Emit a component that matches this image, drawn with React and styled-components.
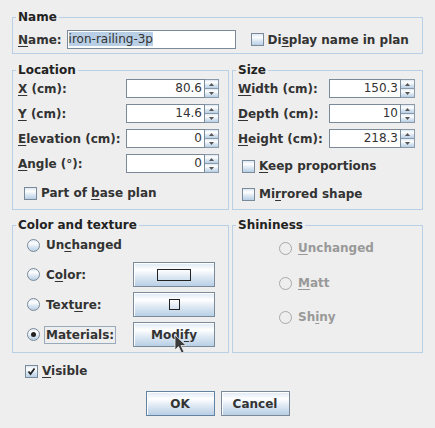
import React from 'react'
import styled, { createGlobalStyle } from 'styled-components'

const Global = createGlobalStyle`
  html, body { margin: 0; padding: 0; background: #eeeeee; }
  body {
    font-family: "DejaVu Sans", "Liberation Sans", sans-serif;
    font-size: 12px;
    color: #333333;
  }
`

const ocean = `linear-gradient(to bottom, #dde8f3 0%, #ffffff 30%, #dde8f3 60%, #b8cfe5 100%)`

const Dialog = styled.div`
  position: relative;
  width: 435px;
  height: 428px;
  box-sizing: border-box;
  padding: 10px 12px 0 12px;
  display: flex;
  flex-direction: column;
`

const Group = styled.fieldset`
  margin: 0;
  padding: 0;
  min-width: 0;
  border: 1px solid #b8cfe5;
  display: flex;
  flex-direction: column;
`

const Title = styled.legend`
  margin-left: 3px;
  padding: 0 2px;
  font-weight: bold;
  line-height: 15px;
  color: #222222;
`

const Body = styled.div`
  flex: 1;
  display: flex;
  flex-direction: column;
  align-items: ${p => p.$center ? 'center' : 'stretch'};
  padding: ${p => p.$pad};
`

const Grid = styled.div`
  display: grid;
  grid-template-columns: 217px 191px;
  column-gap: 3px;
  margin-top: ${p => p.$top}px;
`

const NameRow = styled.div`
  display: flex;
  align-items: center;
  height: 19px;
`

const Label = styled.span`
  font-weight: bold;
  white-space: nowrap;
  margin-right: ${p => p.$gap || 0}px;
`

const U = styled.u`
  text-decoration: underline;
  text-underline-offset: 2px;
  text-decoration-thickness: 1px;
`

const TextField = styled.div`
  width: ${p => p.$w}px;
  height: 19px;
  box-sizing: border-box;
  border: 1px solid #7a8a99;
  background: #ffffff;
  line-height: 17px;
  padding: 0 2px 0 1px;
  text-align: ${p => p.$right ? 'right' : 'left'};
  white-space: nowrap;
  overflow: hidden;
`

const Selected = styled.span`
  background: #b8cfe5;
  color: #333333;
`

const SpinRow = styled.div`
  display: flex;
  align-items: center;
  justify-content: space-between;
  height: 19px;
  margin-top: ${p => p.$top || 0}px;
`

const Spinner = styled.div`
  display: flex;
  height: 19px;
`

const Arrows = styled.div`
  width: 14px;
  display: flex;
  flex-direction: column;
`

const ArrowBtn = styled.div`
  height: ${p => p.$h}px;
  box-sizing: border-box;
  border: 1px solid #8a9aa9;
  border-left: none;
  border-top: ${p => p.$down ? 'none' : '1px solid #8a9aa9'};
  background: ${ocean};
  display: flex;
  align-items: center;
  justify-content: center;
`

const CheckRow = styled.div`
  display: flex;
  align-items: center;
  gap: 4px;
  height: 20px;
  font-weight: bold;
  margin-top: ${p => p.$top || 0}px;
  margin-left: ${p => p.$left || 0}px;
`

const Box = styled.span`
  width: 13px;
  height: 13px;
  box-sizing: border-box;
  border: 1px solid #7a8a99;
  background: ${ocean};
  display: inline-flex;
  align-items: center;
  justify-content: center;
  flex: none;
`

const RadioRow = styled.div`
  display: flex;
  align-items: center;
  justify-content: space-between;
  height: ${p => p.$h || 20}px;
  margin-top: ${p => p.$top || 0}px;
`

const RadioLabel = styled.div`
  display: flex;
  align-items: center;
  gap: 4px;
  font-weight: bold;
  color: ${p => p.$disabled ? '#999999' : '#333333'};
`

const Radio = styled.span`
  width: 13px;
  height: 13px;
  box-sizing: border-box;
  border-radius: 50%;
  border: 1px solid ${p => p.$disabled ? '#a8a8a8' : '#7a8a99'};
  background: ${p => p.$disabled ? '#eeeeee' : ocean};
  display: inline-flex;
  align-items: center;
  justify-content: center;
  flex: none;

  &::after {
    content: "";
    display: ${p => p.$on ? 'block' : 'none'};
    width: 5px;
    height: 5px;
    border-radius: 50%;
    background: #222222;
  }
`

const Focusable = styled.span`
  border: 1px solid ${p => p.$focus ? '#99aabb' : 'transparent'};
  padding: 1px 1px;
  line-height: 14px;
`

const Button = styled.button`
  width: ${p => p.$w}px;
  height: ${p => p.$h || 25}px;
  box-sizing: border-box;
  padding: 0;
  border: 1px solid ${p => p.$default ? '#63829f' : '#7a8a99'};
  box-shadow: inset 1px 1px 0 #ffffff;
  background: ${ocean};
  font-family: "DejaVu Sans", "Liberation Sans", sans-serif;
  font-size: 12px;
  font-weight: bold;
  color: #333333;
  display: flex;
  align-items: center;
  justify-content: center;
`

const Swatch = styled.span`
  width: ${p => p.$w}px;
  height: ${p => p.$h}px;
  box-sizing: border-box;
  border: 1px solid #222222;
`

const Footer = styled.div`
  display: flex;
  justify-content: center;
  gap: 6px;
  margin-top: 10px;
`

const Cursor = styled.svg`
  position: absolute;
  left: 174px;
  top: 334px;
`

const Up = () => (
  <svg width="5" height="3" viewBox="0 0 5 3"><path d="M2.5 0 L5 3 L0 3 Z" fill="#555" /></svg>
)
const Down = () => (
  <svg width="5" height="3" viewBox="0 0 5 3"><path d="M0 0 L5 0 L2.5 3 Z" fill="#555" /></svg>
)

const Spin = ({ value, w }) => (
  <Spinner>
    <TextField $w={w} $right>{value}</TextField>
    <Arrows>
      <ArrowBtn $h={10}><Up /></ArrowBtn>
      <ArrowBtn $h={9} $down><Down /></ArrowBtn>
    </Arrows>
  </Spinner>
)

const Check = ({ on }) => (
  <Box>
    {on && (
      <svg width="9" height="9" viewBox="0 0 9 9">
        <path d="M1.5 4.5 L3.5 7 L7.5 1.5" stroke="#222" strokeWidth="1.8" fill="none" />
      </svg>
    )}
  </Box>
)

const location = [
  [<><U>X</U> (cm):</>, '80.6'],
  [<><U>Y</U> (cm):</>, '14.6'],
  [<><U>E</U>levation (cm):</>, '0'],
  [<><U>A</U>ngle (°):</>, '0'],
]

const size = [
  [<><U>W</U>idth (cm):</>, '150.3'],
  [<><U>D</U>epth (cm):</>, '10'],
  [<><U>H</U>eight (cm):</>, '218.3'],
]

export default function App() {
  return (
    <Dialog>
      <Global />
      <Group>
        <Title>Name</Title>
        <Body $pad="5px 0 4px 5px">
          <NameRow>
            <Label $gap={5}><U>N</U>ame:</Label>
            <TextField $w={169}><Selected>iron-railing-3p</Selected></TextField>
            <CheckRow $left={15}>
              <Check />
              <span>Di<U>s</U>play name in plan</span>
            </CheckRow>
          </NameRow>
        </Body>
      </Group>

      <Grid $top={9}>
        <Group>
          <Title>Location</Title>
          <Body $pad="1px 9px 6px 5px">
            {location.map(([label, value], i) => (
              <SpinRow key={i} $top={i ? 6 : 0}>
                <Label>{label}</Label>
                <Spin value={value} w={79} />
              </SpinRow>
            ))}
            <CheckRow $top={10} $left={6}>
              <Check />
              <span>Part of <U>b</U>ase plan</span>
            </CheckRow>
          </Body>
        </Group>
        <Group>
          <Title>Size</Title>
          <Body $pad="1px 7px 5px 5px">
            {size.map(([label, value], i) => (
              <SpinRow key={i} $top={i ? 6 : 0}>
                <Label>{label}</Label>
                <Spin value={value} w={72} />
              </SpinRow>
            ))}
            <CheckRow $top={8} $left={4}>
              <Check />
              <span><U>K</U>eep proportions</span>
            </CheckRow>
            <CheckRow $top={8} $left={4}>
              <Check />
              <span>Mi<U>r</U>rored shape</span>
            </CheckRow>
          </Body>
        </Group>
      </Grid>

      <Grid $top={8}>
        <Group>
          <Title>Color and texture</Title>
          <Body $pad="2px 13px 5px 14px">
            <RadioRow>
              <RadioLabel><Radio /><Focusable>Un<U>c</U>hanged</Focusable></RadioLabel>
            </RadioRow>
            <RadioRow $h={25} $top={7}>
              <RadioLabel><Radio /><Focusable>C<U>o</U>lor:</Focusable></RadioLabel>
              <Button $w={82}><Swatch $w={34} $h={12} /></Button>
            </RadioRow>
            <RadioRow $h={25} $top={5}>
              <RadioLabel><Radio /><Focusable>Text<U>u</U>re:</Focusable></RadioLabel>
              <Button $w={82}><Swatch $w={11} $h={11} /></Button>
            </RadioRow>
            <RadioRow $h={25} $top={5}>
              <RadioLabel><Radio $on /><Focusable $focus>Materials:</Focusable></RadioLabel>
              <Button $w={82}>Modi<U>f</U>y</Button>
            </RadioRow>
          </Body>
        </Group>
        <Group>
          <Title>Shininess</Title>
          <Body $center $pad="5px 0 5px 0">
            <RadioRow>
              <RadioLabel $disabled><Radio $disabled /><Focusable><U>U</U>nchanged</Focusable></RadioLabel>
            </RadioRow>
            <RadioRow $top={15}>
              <RadioLabel $disabled style={{ width: 97 }}><Radio $disabled /><Focusable><U>M</U>att</Focusable></RadioLabel>
            </RadioRow>
            <RadioRow $top={14}>
              <RadioLabel $disabled style={{ width: 97 }}><Radio $disabled /><Focusable>Sh<U>i</U>ny</Focusable></RadioLabel>
            </RadioRow>
          </Body>
        </Group>
      </Grid>

      <CheckRow $top={8} $left={13}>
        <Check on />
        <span><U>V</U>isible</span>
      </CheckRow>

      <Footer>
        <Button $w={69} $default>OK</Button>
        <Button $w={69}>Cancel</Button>
      </Footer>

      <Cursor width="13" height="20" viewBox="0 0 13 20">
        <path d="M1 1 L1 16 L4.5 12.5 L7.5 19 L10 18 L7 11.5 L12 11.5 Z" fill="#3a3a3a" stroke="#eeeeee" strokeWidth="0.8" />
      </Cursor>
    </Dialog>
  )
}
